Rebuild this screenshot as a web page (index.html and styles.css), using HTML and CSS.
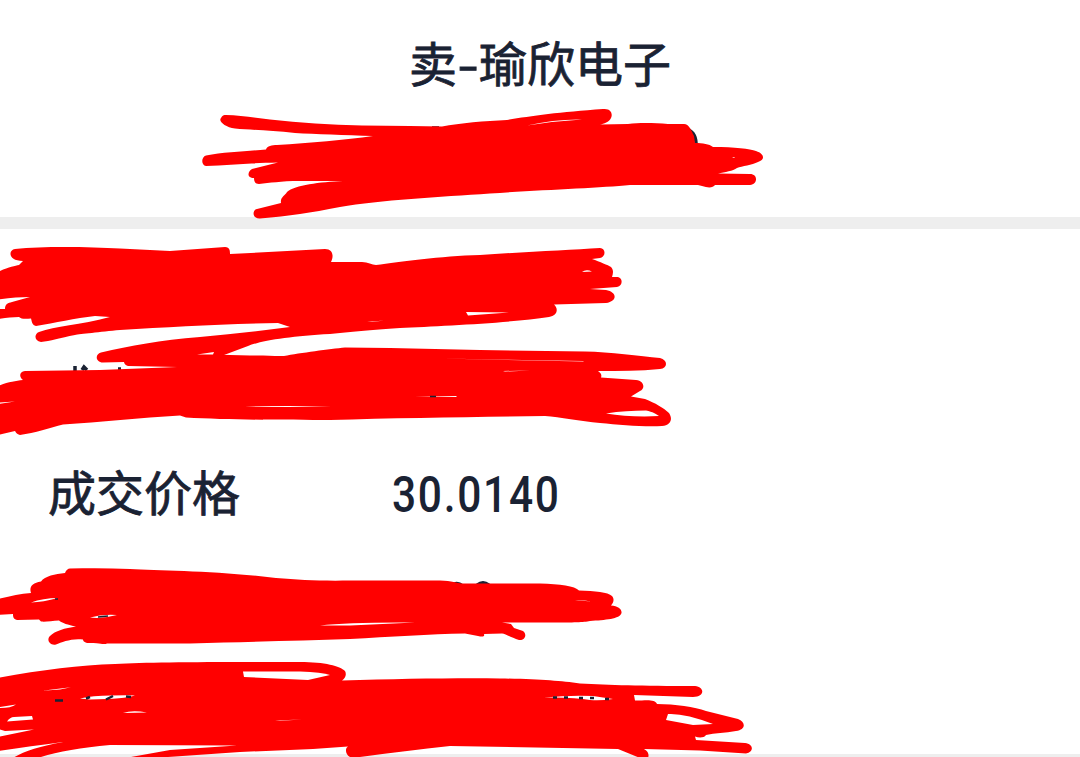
FILE: index.html
```
<!DOCTYPE html>
<html lang="zh-CN">
<head>
    <meta charset="UTF-8">
    <meta name="viewport" content="width=device-width, initial-scale=1.0">
    <title>卖-瑜欣电子</title>
    <link rel="stylesheet" href="styles.css">
</head>
<body>
    <div class="page">
        <div class="header">
            <h1>卖<span class="dash">-</span>瑜欣电子</h1>
        </div>

        <div class="content">
            <div class="row"></div>
            <div class="row"></div>
            <div class="row">
                <span class="label">成交价格</span>
                <span class="value">30.0140</span>
            </div>
            <div class="row"></div>
            <div class="row"></div>
        </div>

        <!-- Hand drawn marker over the private fields -->
        <svg class="marker" width="1080" height="757" viewBox="0 0 1080 757">
            <!-- Bits of text that stick out behind the marker -->
            <g class="ink">
                <path d="M687 129Q697 133 696 147" stroke-width="3.5"/>
                <path d="M75 366V371M82 370L84 367L87 370M118 369H121" stroke-width="3.5"/>
                <path d="M454 584Q458 582 463 586M477 585Q483 580 489 585" stroke-width="3"/>
                <path d="M432 127H439" stroke-width="1.5"/>
            </g>

            <path d="M226 115C240 115 255 118 270 119.5C300 123 330 124.500 362 125.500L410 126L442 126.500C460 123 485 121 507 120C530 116 560 112 603 109C611 108 613 114 611 118C609 122 604 124 600 124.500L628 124C640 122.500 655 123 668 124L684 124C689 124 691 130 694 136L695 143C703 143 709 144 713 147C735 147 750 149 756 151C765 154 765 160 758 162C752 165 742 166 737 168C733 171 725 172 718 173.500L750 174C758 174 758 184 750 185L715 185C713 188 708 188 702 186L698 185L630 185C600 188 540 190 490 193.500C440 197 380 200 340 207C310 213 290 216 260 218.500C252 219 252 210 257 209L281 203C280 197 285 196 287 192C295 185 320 182 343 181L300 181C280 181 270 183 259 184C255 184 254 181 254 178C246 178 248 171 252 169L278 162.500C250 163 230 165 206 166C201 165 201 157 206 155.500C225 152 250 151 266 149.500C267 146 272 145 277 145C310 143 345 140 373 136C345 135 315 134 295 133C270 130 250 130 235 128.500C225 127 218 121 221 118C222 115.500 224 115 226 115Z"/>
            <path d="M15 249C45 246 90 247 120 248.500L170 251L225 247C230 247 230 251 230 254L325 249C333 249 334 256 331 262L362 262C368 262 372 265 376 265C400 262 440 256 480 255C520 252 570 250 600 248C606 248 606 257 600 258L592 259C600 262 608 265 611 267C614 270 613 274 612 277L618 277C623 278 623 286 617 287L590 289L606 290C617 292 618 301 606 303L554 304.500C559 309 557 316 549 317C510 323 440 326 400 328C370 330 350 332 330 334C290 336 260 341 248 346L224 355L214 356L124 362L103 362.500C95 362 95 354 101 352.500C130 346 160 340 200 337C230 334 260 331 290 327L278 323C220 324 170 327 120 330C100 332 80 334 75 335C60 338 50 341 41 342C34 341 34 334 39 332C55 326 80 325 110 317L95 316C75 318 55 323 36 326C32 325 32 322 31 318.500C25 319 21 319 19 317C12 317 6 318 -2 319L-2 309L5 309C5 304 8 303 12 302L30 297C20 297 10 298 -2 299.500L-2 272C8 267 15 266 19 265L23 261C8 261 8 250 15 249Z"/>
            <path d="M25 371L100 370L177 367L128 366C124 365 123 361 125 360L190 354L250 355.500C265 355 275 356.500 284 356C300 353 330 349 345 347.500L390 348L480 350L585 351.500C610 352 640 356 660 358C668 360 668 368 660 369C640 371 620 371 598 371C601 373 602 375 601 377.500L636 380C645 381 645 389 640 391L631 396.500L645 399C655 403 664 408 669 413C673 419 671 425 662 426C645 427 620 425 600 423C580 421 560 417 545 416C480 417 400 418 330 420C290 420 230 420 186 417.500L180 415.500C140 418 100 422 63 424.500C50 428 35 433 20 435C16 434 16 432 15 431L-2 435L-2 386C8 382 15 381 23 380C19 377 19 372 25 371Z"/>
            <path d="M70 568.500C90 568 110 568 130 569C160 570.500 220 571 276 578C300 580 320 581 350 580.500L440 580.500C452 581 457 583 462 583.500L540 583.500C560 584 575 586 579 590.500C595 591 608 592 612 596C615 600 613 603 611 605.500C618 606 622 609 621.500 613C620 619 605 620 590 621C580 623 565 622.500 502 622.500L511 624L514 628L523 631C528 635 524 641 519 640C512 638 506 634 502 633.500L484 634C485 637 482 637 478 636L465 633.500C430 634 390 637 350 639C300 640.500 250 642 190 643.500L107 643.500C104 645 102 643 87 643C84 642 83 641 83 639.500C72 638 62 642 56 644.500C50 646 46 640 50 636C55 631 65 628 76 626.500C68 625 62 623 59 620.500C52 621 45 622 41 621.500L39 619.500L17 620C13 619 13 616 13 614L-2 615L-2 599C10 596 20 594 31 593C29 587 32 583 41 581.500C45 576 55 574 65 573C66 570 68 568.500 70 568.500Z"/>
            <path d="M-2 678C40 670 80 665 115 664C150 662 200 662 300 662C325 662 340 666 345 671C347 675 345 678 342 680.500C400 679 450 678 500 678.500C540 679 560 681 580 683.500C610 685 640 686 695 686C705 687 705 697 693 697L634 695L635 700.500C642 701 655 698 657 704C675 704 695 707 706 711L738 719C746 722 746 730 736 731C725 733 715 733 706 735C704 738 699 738 695 736.500L696 740L745 743C754 744 754 752 746 753.500L700 750.500L644 749C649 752 649 755 648 758L640 758L618 749L450 746C420 749 390 753 360 757L350 757C345 754 345 748 348 746.500L313 749L240 752L168 757L131 757L170 750L237 745.500L110 745C80 748 55 752 38 758L13 758C22 752 40 746 63 742C40 745 20 748 -2 751L-2 737L34 729.500L5 731L-2 729Z"/>

            <!-- Gaps between the strokes -->
            <g class="gap">
                <path d="M527 125.500Q555 119 582 119.500Q555 121 527 125.500ZM732 157.500L735 157L734 158Z"/>
                <path d="M466 312L509 312.500L468 315.500ZM582 272Q586 269 592 271.500ZM367 322L384 320.500L372 322Z"/>
                <path d="M197 354.500L214 352L213 354.500Z"/>
                <path d="M606 413.500C620 411 633 411 646 410.500C653 412 656 414 659 416C640 417 622 416 606 413.500Z"/>
                <path d="M245 406.500Q290 405.500 331 406.500Q290 407.300 245 406.500ZM440 358.500L583 361L584 361.500ZM503 371L530 370.500L505 371.500ZM415 396.500L457 396L456 397ZM-1 402.500L15 401.500L-1 404Z"/>
                <path d="M31 602.500Q43 598 58 598Q43 602 31 602.500ZM90 617.500Q102 614 117 615Q102 619 90 617.500ZM320 625.500Q350 622 415 622.500L350 625.500ZM575 600Q583 599.500 591 601.500Z"/>
                <path d="M243 671.500H300Q322 672 330 675L308 680L244 677Z"/>
                <path d="M7 721.500Q10 717 14 717L32 716L33 719.500ZM80 698.500Q92 695.500 112 695.500Q128 695 135 695.500Q125 699 90 699.500ZM0 707L16 704.500Q11 708 0 708ZM123 713Q132 710 147 712.500ZM42 690.700L71 687.300L60 689.500ZM275 720.500L302 719.500L280 720.700Z"/>
                <path d="M544 697.500Q570 695 593 696L613 699Q600 701 590 700Q575 697 544 697.500ZM668 714Q685 713 713 724L693 725L666 720Z"/>
            </g>
            <g class="ink">
                <path d="M86 698.500L90 697M106 699.500L113 696M126 696.500L131 697M55 700.500H63" stroke-width="2.500"/>
                <path d="M98 617L108 616M55 599H58M430 396.500H436" stroke-width="1.500"/>
                <path d="M553 697.500H557M564 697.500H568M579 698H583M590 698H594M605 699H609" stroke-width="2.500"/>
            </g>
        </svg>
    </div>
</body>
</html>
```
FILE: styles.css
```
body {
    margin: 0;
    background: #fff;
    color: #1a2233;
    font-family: "Noto Sans CJK SC", sans-serif;
    overflow: hidden;
}

.page {
    position: relative;
    width: 1080px;
    height: 757px;
    overflow: hidden;
}

.header {
    height: 217px;
    border-bottom: 12px solid #eee;
    text-align: center;
}

.header h1 {
    margin: 0;
    padding-top: 25px;
    font-size: 48px;
    line-height: 72px;
    font-weight: 400;
    -webkit-text-stroke: 0.8px #1a2233;
}

.dash {
    display: inline-block;
    width: 22px;
    transform: scaleX(1.3);
}

.content {
    height: 525px;
    border-bottom: 3px solid #eee;
}

.row {
    display: flex;
    align-items: center;
    height: 105px;
    padding-left: 48px;
}

.label {
    width: 344px;
    padding-bottom: 3px;
    font-size: 48px;
    -webkit-text-stroke: 0.8px #1a2233;
}

.value {
    padding-top: 7px;
    font-family: Roboto, sans-serif;
    font-size: 50px;
    font-weight: 500;
    letter-spacing: 2px;
    transform: scaleX(0.85); /* condensed figures */
    transform-origin: left;
}

.marker {
    position: absolute;
    left: 0;
    top: 0;
    fill: #f00;
}

.gap {
    fill: #fff;
}

.ink {
    fill: none;
    stroke: #1a2233;
}
```
